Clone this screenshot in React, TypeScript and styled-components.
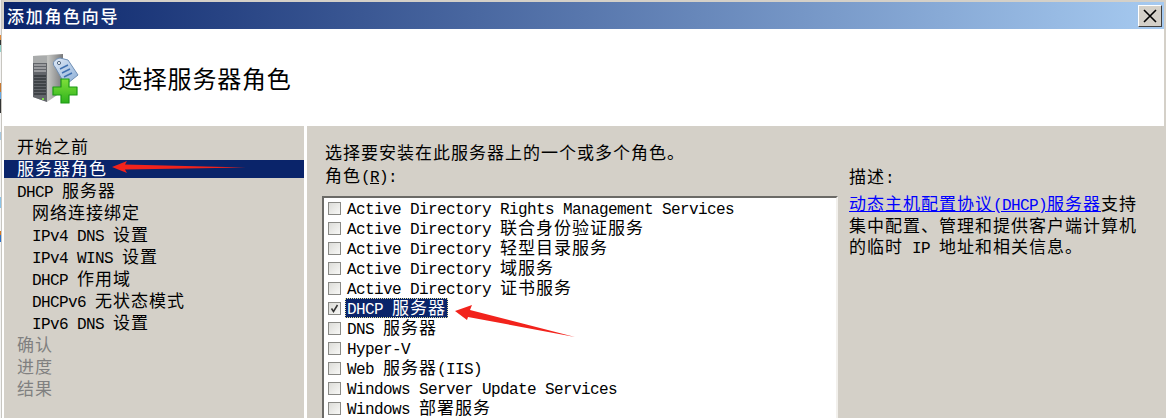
import { Fragment } from 'react';
import styled, { createGlobalStyle } from 'styled-components';

const CJK_FONT = '"Noto Sans CJK SC", "Noto Sans", sans-serif';

const roles = [
  { name: 'Active Directory Rights Management Services' },
  { name: 'Active Directory 联合身份验证服务' },
  { name: 'Active Directory 轻型目录服务' },
  { name: 'Active Directory 域服务' },
  { name: 'Active Directory 证书服务' },
  { name: 'DHCP 服务器', checked: true },
  { name: 'DNS 服务器' },
  { name: 'Hyper-V' },
  { name: 'Web 服务器(IIS)' },
  { name: 'Windows Server Update Services' },
  { name: 'Windows 部署服务' },
];

const steps = [
  { label: '开始之前' },
  { label: '服务器角色', selected: true },
  { label: 'DHCP 服务器' },
  { label: '网络连接绑定', sub: true },
  { label: 'IPv4 DNS 设置', sub: true },
  { label: 'IPv4 WINS 设置', sub: true },
  { label: 'DHCP 作用域', sub: true },
  { label: 'DHCPv6 无状态模式', sub: true },
  { label: 'IPv6 DNS 设置', sub: true },
  { label: '确认', disabled: true },
  { label: '进度', disabled: true },
  { label: '结果', disabled: true },
];

// latin runs are half of a CJK cell wide, as in the system font of the dialog
const Mixed = ({ text }: { text: string }) => (
  <>
    {text.split(/([\x20-\x7e]+)/).map((part, i) =>
      /^[\x20-\x7e]+$/.test(part) ? <Latin key={i}>{part}</Latin> : <Fragment key={i}>{part}</Fragment>,
    )}
  </>
);

const ServerIcon = () => (
  <IconSvg viewBox="0 0 50 54">
    <defs>
      <linearGradient id="side" x1="0" x2="1" y1="0" y2="0">
        <stop offset="0" stopColor="#8d8f8e" />
        <stop offset="0.5" stopColor="#c4c5c2" />
        <stop offset="1" stopColor="#77787a" />
      </linearGradient>
      <linearGradient id="tag" x1="0" x2="1" y1="0" y2="1">
        <stop offset="0" stopColor="#dfe9f6" />
        <stop offset="1" stopColor="#8eb0d8" />
      </linearGradient>
      <linearGradient id="plus" x1="0" x2="0" y1="0" y2="1">
        <stop offset="0" stopColor="#7fe03a" />
        <stop offset="1" stopColor="#2eb21c" />
      </linearGradient>
    </defs>
    <path d="M3 5 L17 4 L33 3 L33 40 L17 51 L3 46 Z" fill="url(#side)" />
    <path d="M3 5 L17 5 L17 51 L3 46 Z" fill="#62656a" />
    <path d="M3 5 L17 5 L17 12 L3 12 Z" fill="#a9abab" />
    <path d="M4 14 H16 M4 17 H16 M4 20 H16" stroke="#cfd0d0" strokeWidth="1" />
    <path d="M4 25 H16 M4 28 H16 M4 31 H16 M4 34 H16 M4 37 H16 M4 40 H16 M4 43 H16" stroke="#35383c" strokeWidth="1.4" />
    <rect x="12" y="47" width="2" height="2" fill="#7ee04a" />
    <path d="M25 16 C21 12 25 8 30 7 L38 9 L48 24 L38 32 L33 30 Z" fill="url(#tag)" stroke="#6f8fb5" />
    <circle cx="29" cy="12" r="1.6" fill="#f4f7fb" stroke="#52677f" />
    <path d="M30 18 L38 14 M32 22 L40 18 M34 26 L42 22" stroke="#3f70b0" strokeWidth="1.4" />
    <path
      d="M31 28 H39 V36 H47 V44 H39 V52 H31 V44 H23 V36 H31 Z"
      fill="url(#plus)"
      stroke="#1c9a14"
      strokeWidth="1.2"
      strokeLinejoin="round"
    />
  </IconSvg>
);

const App = () => (
  <>
    <GlobalStyle />
    <Desktop>
      <BehindStrip />
      <Window>
        <TitleBar>
          <TitleText>添加角色向导</TitleText>
          <CloseButton aria-label="关闭">
            <svg width="16" height="16" viewBox="0 0 16 16">
              <path d="M2 2 L14 14 M14 2 L2 14" stroke="#000" strokeWidth="1.6" />
            </svg>
          </CloseButton>
        </TitleBar>
        <Header>
          <ServerIcon />
          <Heading>选择服务器角色</Heading>
        </Header>
        <Body>
          <Nav>
            {steps.map((step) => (
              <NavItem key={step.label} $selected={step.selected} $sub={step.sub} $disabled={step.disabled}>
                <Mixed text={step.label} />
              </NavItem>
            ))}
          </Nav>
          <Main>
            <Roles>
              <Text>
                <Mixed text="选择要安装在此服务器上的一个或多个角色。" />
              </Text>
              <Text>
                角色<Latin>(<u>R</u>):</Latin>
              </Text>
              <RoleList>
                {roles.map((role) => (
                  <RoleRow key={role.name}>
                    <CheckBox>
                      {role.checked && (
                        <svg width="11" height="11" viewBox="0 0 11 11">
                          <path d="M2.5 5.5 L4.5 8.5 L8.5 2" fill="none" stroke="#333" strokeWidth="1.5" />
                        </svg>
                      )}
                    </CheckBox>
                    <RoleName $selected={role.checked}>
                      <Mixed text={role.name} />
                    </RoleName>
                  </RoleRow>
                ))}
              </RoleList>
            </Roles>
            <Description>
              <Text>
                描述<Latin>:</Latin>
              </Text>
              <DescriptionBody>
                <DescLink href="#">
                  <Mixed text="动态主机配置协议(DHCP)服务器" />
                </DescLink>
                <Mixed text="支持集中配置、管理和提供客户端计算机的临时 IP 地址和相关信息。" />
              </DescriptionBody>
            </Description>
          </Main>
        </Body>
      </Window>
      <NavArrow viewBox="0 0 135 12">
        <path d="M0 6 L15 0 L13 3.5 L134 6.5 L13 8.5 L15 12 Z" fill="#f2231c" />
      </NavArrow>
      <RoleArrow viewBox="0 0 122 34">
        <path d="M0 6 L17 0 L15 5 L120 32 L13 12 L12 15 Z" fill="#f2231c" />
      </RoleArrow>
    </Desktop>
  </>
);

const GlobalStyle = createGlobalStyle`
  html, body {
    margin: 0;
    padding: 0;
    overflow: hidden;
    background: #fff;
  }
`;

const Desktop = styled.div`
  position: relative;
  display: flex;
  width: 1166px;
  height: 418px;
  overflow: hidden;
  font-family: ${CJK_FONT};
  font-size: 17px;
  letter-spacing: 1px;
  line-height: 16px;
  color: #000;
`;

// the sliver of desktop that shows left of the dialog
const BehindStrip = styled.div`
  width: 1px;
  flex: none;
  background: linear-gradient(
    #efefef 0 35px,
    #e0883a 35px 40px,
    #333 40px 45px,
    #8fd0c8 45px 52px,
    #f4f4f4 52px 83px,
    #c87830 83px 92px,
    #66a6e0 92px 99px,
    #333 99px 113px,
    #f4f4f4 113px 132px,
    #a8c8e0 132px 140px,
    #f4f4f4 140px 197px,
    #8cc4e8 197px 208px,
    #f4f4f4 208px 231px,
    #d87820 231px 235px,
    #2a70c8 235px 242px,
    #f4f4f4 242px
  );
`;

const Window = styled.div`
  display: flex;
  flex-direction: column;
  width: 1165px;
  height: 418px;
  box-sizing: border-box;
  padding: 2px 2px 0 0;
  background: #d4d0c8;
  border-left: 1px solid #c8c6c0;
`;

const TitleBar = styled.div`
  display: flex;
  align-items: center;
  justify-content: space-between;
  height: 27px;
  flex: none;
  margin-left: 2px;
  padding: 0 2px 0 3px;
  box-sizing: border-box;
  background: linear-gradient(90deg, #0a246a, #a6caf0);
`;

const TitleText = styled.div`
  font-size: 17px;
  font-weight: 500;
  letter-spacing: 1.7px;
  color: #fff;
`;

const CloseButton = styled.button`
  display: flex;
  align-items: center;
  justify-content: center;
  width: 24px;
  height: 22px;
  padding: 0;
  background: #d4d0c8;
  border: 1px solid;
  border-color: #fff #404040 #404040 #fff;
`;

const Header = styled.div`
  display: flex;
  align-items: center;
  height: 97px;
  flex: none;
  background: #fff;
`;

const IconSvg = styled.svg`
  width: 50px;
  height: 54px;
  margin: 0 0 0 28px;
  flex: none;
`;

const Heading = styled.h1`
  margin: 0 0 0 38px;
  font-size: 24px;
  font-weight: 400;
  letter-spacing: 0.8px;
  line-height: 30px;
`;

const Body = styled.div`
  display: flex;
  flex: 1;
  min-height: 0;
  padding-left: 2px;
  background: #fff;
  gap: 3px;
`;

const Nav = styled.nav`
  display: flex;
  flex-direction: column;
  gap: 4px;
  width: 300px;
  flex: none;
  padding-top: 12px;
  box-sizing: border-box;
  background: #d4d0c8;
`;

const NavItem = styled.div<{ $selected?: boolean; $sub?: boolean; $disabled?: boolean }>`
  height: 18px;
  padding-left: ${({ $sub }) => ($sub ? '28px' : '13px')};
  white-space: pre;
  background: ${({ $selected }) => ($selected ? '#0a246a' : 'transparent')};
  color: ${({ $selected, $disabled }) => ($selected ? '#fff' : $disabled ? '#808080' : '#000')};
`;

const Main = styled.div`
  display: flex;
  flex: 1;
  min-width: 0;
  background: #d4d0c8;
`;

const Roles = styled.div`
  display: flex;
  flex-direction: column;
  width: 516px;
  margin-left: 15px;
  padding-top: 18px;
  box-sizing: border-box;
  flex: none;
`;

const Text = styled.div`
  height: 18px;
  margin: 0 0 6px 3px;
  white-space: pre;
`;

const RoleList = styled.div`
  display: flex;
  flex-direction: column;
  flex: 1;
  margin-top: 5px;
  padding-left: 4px;
  box-sizing: border-box;
  background: #fff;
  border: 2px solid;
  border-color: #6b6a66 #f2f0ec #d4d0c8 #6b6a66;
  border-bottom: none;
`;

const RoleRow = styled.div`
  display: flex;
  align-items: center;
  gap: 4px;
  height: 20px;
  flex: none;
`;

const CheckBox = styled.span`
  display: flex;
  align-items: center;
  justify-content: center;
  width: 11px;
  height: 11px;
  flex: none;
  background: linear-gradient(135deg, #dcdcd8, #f8f8f6);
  border: 1px solid #8a8a86;
`;

const RoleName = styled.span<{ $selected?: boolean }>`
  display: block;
  height: 18px;
  white-space: pre;
  padding: 0 1px;
  border: 1px ${({ $selected }) => ($selected ? 'dotted #e8e4a0' : 'solid transparent')};
  background: ${({ $selected }) => ($selected ? '#0a246a' : 'transparent')};
  color: ${({ $selected }) => ($selected ? '#fff' : '#000')};
`;

const Description = styled.div`
  width: 315px;
  margin-left: 8px;
  padding: 42px 15px 0 0;
  box-sizing: border-box;
  flex: none;
`;

const DescriptionBody = styled.div`
  margin: 0 0 0 3px;
  line-height: 21px;
`;

const DescLink = styled.a`
  color: #0000ff;
  text-decoration: underline;
`;

const Latin = styled.span`
  font-family: "Liberation Mono", monospace;
  font-size: 16px;
  letter-spacing: -0.6px;
  line-height: 1;
`;

const NavArrow = styled.svg`
  position: absolute;
  left: 112px;
  top: 161px;
  width: 135px;
  height: 12px;
`;

const RoleArrow = styled.svg`
  position: absolute;
  left: 455px;
  top: 305px;
  width: 122px;
  height: 34px;
`;

export default App;
